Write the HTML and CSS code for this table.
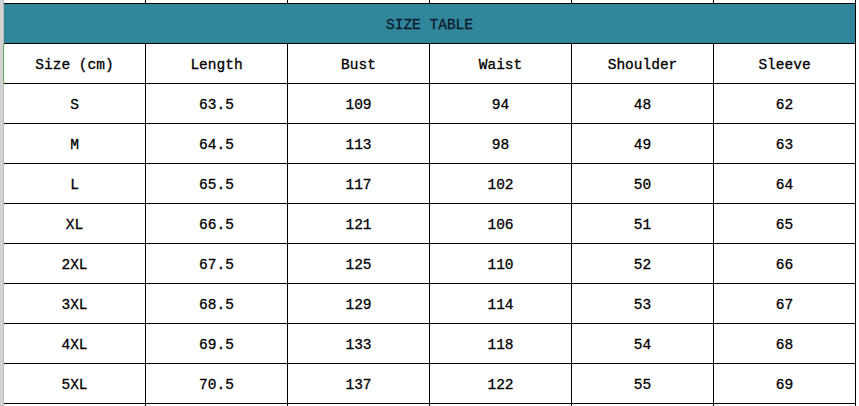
FILE: index.html
```html
<!DOCTYPE html>
<html>
<head>
<meta charset="utf-8">
<link rel="stylesheet" href="styles.css">
</head>
<body>
<div class="sheet">
  <div class="gutter">
    <div class="g-top"></div>
    <div class="g-title"></div>
    <div class="g-head"></div>
    <div class="g-rest"></div>
  </div>
  <div class="grid">
    <div class="cell stub"></div><div class="cell stub"></div><div class="cell stub"></div><div class="cell stub"></div><div class="cell stub"></div><div class="cell stub"></div>
    <div class="cell title">SIZE TABLE</div>
    <div class="cell">Size (cm)</div><div class="cell">Length</div><div class="cell">Bust</div><div class="cell">Waist</div><div class="cell">Shoulder</div><div class="cell">Sleeve</div>
    <div class="cell">S</div><div class="cell">63.5</div><div class="cell">109</div><div class="cell">94</div><div class="cell">48</div><div class="cell">62</div>
    <div class="cell">M</div><div class="cell">64.5</div><div class="cell">113</div><div class="cell">98</div><div class="cell">49</div><div class="cell">63</div>
    <div class="cell">L</div><div class="cell">65.5</div><div class="cell">117</div><div class="cell">102</div><div class="cell">50</div><div class="cell">64</div>
    <div class="cell">XL</div><div class="cell">66.5</div><div class="cell">121</div><div class="cell">106</div><div class="cell">51</div><div class="cell">65</div>
    <div class="cell">2XL</div><div class="cell">67.5</div><div class="cell">125</div><div class="cell">110</div><div class="cell">52</div><div class="cell">66</div>
    <div class="cell">3XL</div><div class="cell">68.5</div><div class="cell">129</div><div class="cell">114</div><div class="cell">53</div><div class="cell">67</div>
    <div class="cell">4XL</div><div class="cell">69.5</div><div class="cell">133</div><div class="cell">118</div><div class="cell">54</div><div class="cell">68</div>
    <div class="cell">5XL</div><div class="cell">70.5</div><div class="cell">137</div><div class="cell">122</div><div class="cell">55</div><div class="cell">69</div>
    <div class="cell tail"></div><div class="cell tail"></div><div class="cell tail"></div><div class="cell tail"></div><div class="cell tail"></div><div class="cell tail"></div>
  </div>
</div>
</body>
</html>
```
FILE: styles.css
```css
html, body {
  margin: 0;
  padding: 0;
  background: #fff;
  overflow: hidden;
}
.sheet {
  display: flex;
  width: 859px;
  height: 406px;
  overflow: hidden;
}
.gutter {
  width: 3px;
  display: flex;
  flex-direction: column;
  background: #d2d2d2;
  border-right: 1px solid #bdbdbd;
}
.g-top { height: 4px; }
.g-title { height: 40px; }
.g-head { height: 40px; }
.gutter .g-head { box-shadow: 1px 0 0 #6aae57; }
.g-rest { flex: 1; }
.grid {
  display: grid;
  grid-template-columns: repeat(6, 142px);
  grid-template-rows: 4px 40px repeat(9, 40px) 10px;
  font-family: "Liberation Mono", "DejaVu Sans Mono", monospace;
  font-size: 14.5px;
  color: #000;
  -webkit-text-stroke: 0.3px #000;
}
.cell {
  box-sizing: border-box;
  border-right: 1px solid #000;
  border-bottom: 1px solid #000;
  display: flex;
  align-items: center;
  justify-content: center;
  padding-top: 3px;
}
.tail { border-bottom: 0; }
.title {
  grid-column: 1 / span 6;
  background: #31869b;
  color: #0d1a2a;
  -webkit-text-stroke: 0.3px #0d1a2a;
}
```
